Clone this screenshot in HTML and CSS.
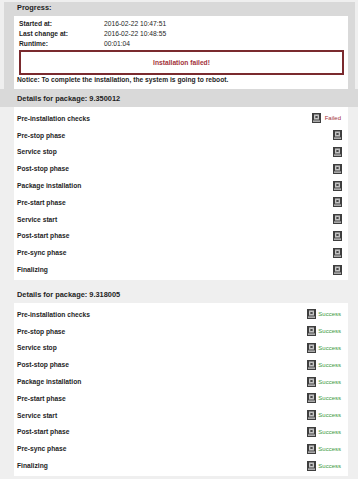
FILE: index.html
```html
<!DOCTYPE html>
<html lang="en">
<head>
  <meta charset="UTF-8">
  <title>Installation progress</title>
  <link rel="stylesheet" href="styles.css">
</head>
<body>
  <div class="progress">
    <h2>Progress:</h2>
    <div class="box">
      <div class="times">
        <span class="lbl">Started at:</span><span>2016-02-22 10:47:51</span>
        <span class="lbl">Last change at:</span><span>2016-02-22 10:48:55</span>
        <span class="lbl">Runtime:</span><span>00:01:04</span>
      </div>
      <div class="alert">Installation failed!</div>
      <p class="notice">Notice: To complete the installation, the system is going to reboot.</p>
    </div>
  </div>

  <div class="pkg open">
    <h3>Details for package: 9.350012</h3>
    <ul class="steps">
      <li><span>Pre-installation checks</span><span class="status failed"><svg class="ico" width="9" height="10" viewBox="0 0 9 10"><rect width="9" height="10" fill="#3e3e3e"/><rect x="2" y="1.5" width="5" height="5" fill="#c8c8c8"/><path d="M3.4 2.9l2.2 2.2M5.6 2.9l-2.2 2.2" stroke="#222" stroke-width="1"/><rect x="1" y="7.6" width="7" height="1" fill="#f2f2f2"/></svg>Failed</span></li>
      <li><span>Pre-stop phase</span><span class="status"><svg class="ico" width="9" height="10" viewBox="0 0 9 10"><rect width="9" height="10" fill="#3e3e3e"/><rect x="2" y="1.5" width="5" height="5" fill="#c8c8c8"/><path d="M3.4 2.9l2.2 2.2M5.6 2.9l-2.2 2.2" stroke="#222" stroke-width="1"/><rect x="1" y="7.6" width="7" height="1" fill="#f2f2f2"/></svg></span></li>
      <li><span>Service stop</span><span class="status"><svg class="ico" width="9" height="10" viewBox="0 0 9 10"><rect width="9" height="10" fill="#3e3e3e"/><rect x="2" y="1.5" width="5" height="5" fill="#c8c8c8"/><path d="M3.4 2.9l2.2 2.2M5.6 2.9l-2.2 2.2" stroke="#222" stroke-width="1"/><rect x="1" y="7.6" width="7" height="1" fill="#f2f2f2"/></svg></span></li>
      <li><span>Post-stop phase</span><span class="status"><svg class="ico" width="9" height="10" viewBox="0 0 9 10"><rect width="9" height="10" fill="#3e3e3e"/><rect x="2" y="1.5" width="5" height="5" fill="#c8c8c8"/><path d="M3.4 2.9l2.2 2.2M5.6 2.9l-2.2 2.2" stroke="#222" stroke-width="1"/><rect x="1" y="7.6" width="7" height="1" fill="#f2f2f2"/></svg></span></li>
      <li><span>Package installation</span><span class="status"><svg class="ico" width="9" height="10" viewBox="0 0 9 10"><rect width="9" height="10" fill="#3e3e3e"/><rect x="2" y="1.5" width="5" height="5" fill="#c8c8c8"/><path d="M3.4 2.9l2.2 2.2M5.6 2.9l-2.2 2.2" stroke="#222" stroke-width="1"/><rect x="1" y="7.6" width="7" height="1" fill="#f2f2f2"/></svg></span></li>
      <li><span>Pre-start phase</span><span class="status"><svg class="ico" width="9" height="10" viewBox="0 0 9 10"><rect width="9" height="10" fill="#3e3e3e"/><rect x="2" y="1.5" width="5" height="5" fill="#c8c8c8"/><path d="M3.4 2.9l2.2 2.2M5.6 2.9l-2.2 2.2" stroke="#222" stroke-width="1"/><rect x="1" y="7.6" width="7" height="1" fill="#f2f2f2"/></svg></span></li>
      <li><span>Service start</span><span class="status"><svg class="ico" width="9" height="10" viewBox="0 0 9 10"><rect width="9" height="10" fill="#3e3e3e"/><rect x="2" y="1.5" width="5" height="5" fill="#c8c8c8"/><path d="M3.4 2.9l2.2 2.2M5.6 2.9l-2.2 2.2" stroke="#222" stroke-width="1"/><rect x="1" y="7.6" width="7" height="1" fill="#f2f2f2"/></svg></span></li>
      <li><span>Post-start phase</span><span class="status"><svg class="ico" width="9" height="10" viewBox="0 0 9 10"><rect width="9" height="10" fill="#3e3e3e"/><rect x="2" y="1.5" width="5" height="5" fill="#c8c8c8"/><path d="M3.4 2.9l2.2 2.2M5.6 2.9l-2.2 2.2" stroke="#222" stroke-width="1"/><rect x="1" y="7.6" width="7" height="1" fill="#f2f2f2"/></svg></span></li>
      <li><span>Pre-sync phase</span><span class="status"><svg class="ico" width="9" height="10" viewBox="0 0 9 10"><rect width="9" height="10" fill="#3e3e3e"/><rect x="2" y="1.5" width="5" height="5" fill="#c8c8c8"/><path d="M3.4 2.9l2.2 2.2M5.6 2.9l-2.2 2.2" stroke="#222" stroke-width="1"/><rect x="1" y="7.6" width="7" height="1" fill="#f2f2f2"/></svg></span></li>
      <li><span>Finalizing</span><span class="status"><svg class="ico" width="9" height="10" viewBox="0 0 9 10"><rect width="9" height="10" fill="#3e3e3e"/><rect x="2" y="1.5" width="5" height="5" fill="#c8c8c8"/><path d="M3.4 2.9l2.2 2.2M5.6 2.9l-2.2 2.2" stroke="#222" stroke-width="1"/><rect x="1" y="7.6" width="7" height="1" fill="#f2f2f2"/></svg></span></li>
    </ul>
  </div>

  <div class="pkg">
    <h3>Details for package: 9.318005</h3>
    <ul class="steps">
      <li><span>Pre-installation checks</span><span class="status ok"><svg class="ico" width="9" height="10" viewBox="0 0 9 10"><rect width="9" height="10" fill="#3e3e3e"/><rect x="2" y="1.5" width="5" height="5" fill="#c8c8c8"/><path d="M3.4 2.9l2.2 2.2M5.6 2.9l-2.2 2.2" stroke="#222" stroke-width="1"/><rect x="1" y="7.6" width="7" height="1" fill="#f2f2f2"/></svg>Success</span></li>
      <li><span>Pre-stop phase</span><span class="status ok"><svg class="ico" width="9" height="10" viewBox="0 0 9 10"><rect width="9" height="10" fill="#3e3e3e"/><rect x="2" y="1.5" width="5" height="5" fill="#c8c8c8"/><path d="M3.4 2.9l2.2 2.2M5.6 2.9l-2.2 2.2" stroke="#222" stroke-width="1"/><rect x="1" y="7.6" width="7" height="1" fill="#f2f2f2"/></svg>Success</span></li>
      <li><span>Service stop</span><span class="status ok"><svg class="ico" width="9" height="10" viewBox="0 0 9 10"><rect width="9" height="10" fill="#3e3e3e"/><rect x="2" y="1.5" width="5" height="5" fill="#c8c8c8"/><path d="M3.4 2.9l2.2 2.2M5.6 2.9l-2.2 2.2" stroke="#222" stroke-width="1"/><rect x="1" y="7.6" width="7" height="1" fill="#f2f2f2"/></svg>Success</span></li>
      <li><span>Post-stop phase</span><span class="status ok"><svg class="ico" width="9" height="10" viewBox="0 0 9 10"><rect width="9" height="10" fill="#3e3e3e"/><rect x="2" y="1.5" width="5" height="5" fill="#c8c8c8"/><path d="M3.4 2.9l2.2 2.2M5.6 2.9l-2.2 2.2" stroke="#222" stroke-width="1"/><rect x="1" y="7.6" width="7" height="1" fill="#f2f2f2"/></svg>Success</span></li>
      <li><span>Package installation</span><span class="status ok"><svg class="ico" width="9" height="10" viewBox="0 0 9 10"><rect width="9" height="10" fill="#3e3e3e"/><rect x="2" y="1.5" width="5" height="5" fill="#c8c8c8"/><path d="M3.4 2.9l2.2 2.2M5.6 2.9l-2.2 2.2" stroke="#222" stroke-width="1"/><rect x="1" y="7.6" width="7" height="1" fill="#f2f2f2"/></svg>Success</span></li>
      <li><span>Pre-start phase</span><span class="status ok"><svg class="ico" width="9" height="10" viewBox="0 0 9 10"><rect width="9" height="10" fill="#3e3e3e"/><rect x="2" y="1.5" width="5" height="5" fill="#c8c8c8"/><path d="M3.4 2.9l2.2 2.2M5.6 2.9l-2.2 2.2" stroke="#222" stroke-width="1"/><rect x="1" y="7.6" width="7" height="1" fill="#f2f2f2"/></svg>Success</span></li>
      <li><span>Service start</span><span class="status ok"><svg class="ico" width="9" height="10" viewBox="0 0 9 10"><rect width="9" height="10" fill="#3e3e3e"/><rect x="2" y="1.5" width="5" height="5" fill="#c8c8c8"/><path d="M3.4 2.9l2.2 2.2M5.6 2.9l-2.2 2.2" stroke="#222" stroke-width="1"/><rect x="1" y="7.6" width="7" height="1" fill="#f2f2f2"/></svg>Success</span></li>
      <li><span>Post-start phase</span><span class="status ok"><svg class="ico" width="9" height="10" viewBox="0 0 9 10"><rect width="9" height="10" fill="#3e3e3e"/><rect x="2" y="1.5" width="5" height="5" fill="#c8c8c8"/><path d="M3.4 2.9l2.2 2.2M5.6 2.9l-2.2 2.2" stroke="#222" stroke-width="1"/><rect x="1" y="7.6" width="7" height="1" fill="#f2f2f2"/></svg>Success</span></li>
      <li><span>Pre-sync phase</span><span class="status ok"><svg class="ico" width="9" height="10" viewBox="0 0 9 10"><rect width="9" height="10" fill="#3e3e3e"/><rect x="2" y="1.5" width="5" height="5" fill="#c8c8c8"/><path d="M3.4 2.9l2.2 2.2M5.6 2.9l-2.2 2.2" stroke="#222" stroke-width="1"/><rect x="1" y="7.6" width="7" height="1" fill="#f2f2f2"/></svg>Success</span></li>
      <li><span>Finalizing</span><span class="status ok"><svg class="ico" width="9" height="10" viewBox="0 0 9 10"><rect width="9" height="10" fill="#3e3e3e"/><rect x="2" y="1.5" width="5" height="5" fill="#c8c8c8"/><path d="M3.4 2.9l2.2 2.2M5.6 2.9l-2.2 2.2" stroke="#222" stroke-width="1"/><rect x="1" y="7.6" width="7" height="1" fill="#f2f2f2"/></svg>Success</span></li>
    </ul>
  </div>
</body>
</html>
```

FILE: styles.css
```css
body {
  margin: 0;
  background-color: #efefef;
  font-family: "Liberation Sans", Arial, sans-serif;
  font-size: 6.7px;
  color: #1e1e1e;
}
.progress {
  background-color: #d9d9d9;
  margin: 2px 3px 0 4px;
  padding: 0 7px 0 10px;
}
.progress h2 {
  margin: 0;
  padding-left: 3px;
  font-size: 7.4px;
  line-height: 12px;
}
.box {
  background-color: #fff;
  margin-top: 2px;
  padding: 3px 4px 4px 5px;
}
.times {
  display: grid;
  grid-template-columns: 85px 1fr;
  line-height: 10px;
}
.lbl {
  font-weight: bold;
}
.alert {
  margin-top: 1px;
  border: 2px solid #7a2a2e;
  line-height: 21px;
  text-align: center;
  font-weight: bold;
  color: #a3323a;
}
.notice {
  margin: 0 0 0 -2px;
  line-height: 10px;
  font-weight: bold;
}
.pkg h3 {
  margin: 0;
  padding: 9px 0 2px 17px;
  font-size: 7.4px;
  line-height: 12px;
}
.pkg.open h3 {
  background-color: #d9d9d9;
  padding-top: 4px;
}
.steps {
  list-style: none;
  margin: 0 10px 0 14px;
  padding: 3px 6px 2px 3px;
  background-color: #fff;
}
.steps li {
  display: flex;
  justify-content: space-between;
  align-items: center;
  height: 16.8px;
  font-weight: bold;
}
.status {
  display: flex;
  align-items: center;
  gap: 3px;
  font-size: 6px;
  font-weight: normal;
}
.ico {
  display: block;
}
.status.failed {
  color: #a3323a;
  gap: 4px;
  margin-right: 1px;
}
.status.ok {
  color: #3c9a3c;
  gap: 2px;
  margin-right: 1px;
}
```
